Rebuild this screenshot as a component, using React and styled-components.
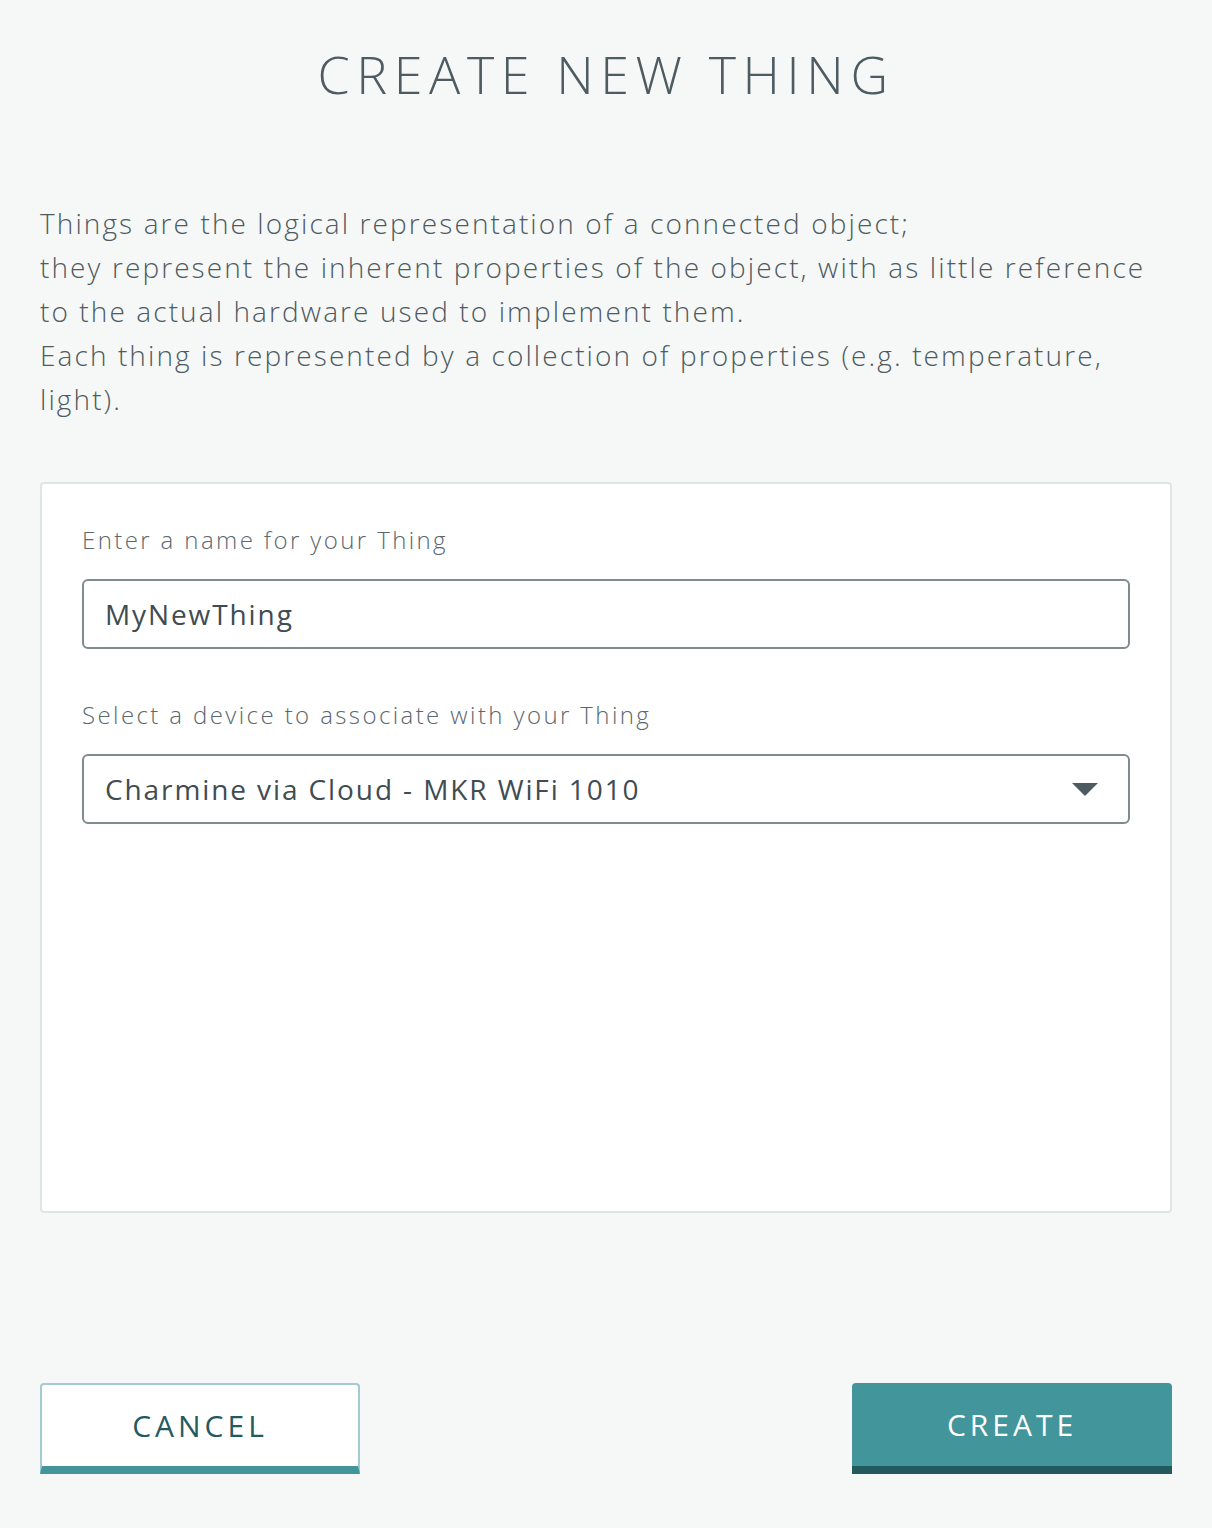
import React from 'react';
import styled, { createGlobalStyle } from 'styled-components';

const GlobalStyle = createGlobalStyle`
  html, body {
    margin: 0;
    padding: 0;
    background: #f6f8f8;
  }
  * { box-sizing: border-box; }
`;

const Page = styled.div`
  width: 1212px;
  min-height: 1528px;
  padding: 44px 40px 54px;
  font-family: 'Open Sans', 'Liberation Sans', sans-serif;
  color: #4e5b61;
  display: flex;
  flex-direction: column;
`;

const Title = styled.h1`
  margin: 0 0 97px;
  font-size: 52px;
  font-weight: 300;
  letter-spacing: 6.6px;
  text-align: center;
  color: #4e5b61;
  line-height: 60px;
`;

const Intro = styled.p`
  margin: 0 0 61px;
  font-size: 28px;
  font-weight: 300;
  line-height: 44px;
  letter-spacing: 2.1px;
  color: #4e5b61;
`;

const Card = styled.div`
  background: #ffffff;
  border: 2px solid #dde5e5;
  border-radius: 4px;
  height: 731px;
  padding: 38px 40px;
  display: flex;
  flex-direction: column;
`;

const Label = styled.label`
  font-size: 24px;
  font-weight: 300;
  letter-spacing: 2.4px;
  color: #5b686e;
  line-height: 36px;
  margin-bottom: 21px;
`;

const Field = styled.div`
  height: 70px;
  border: 2px solid #7f8b8d;
  border-radius: 6px;
  display: flex;
  align-items: center;
  justify-content: space-between;
  padding: 0 30px 0 21px;
  font-size: 28px;
  font-weight: 400;
  letter-spacing: 1.9px;
  color: #3f4c52;
  margin-bottom: ${p => p.gap || 0}px;
`;

const Caret = styled.span`
  width: 0;
  height: 0;
  border-left: 13px solid transparent;
  border-right: 13px solid transparent;
  border-top: 13px solid #4e5b61;
`;

const Actions = styled.div`
  margin-top: auto;
  display: flex;
  justify-content: space-between;
`;

const Button = styled.button`
  width: 320px;
  height: 91px;
  border-radius: 4px 4px 0 0;
  font-family: 'Open Sans', 'Liberation Sans', sans-serif;
  font-size: 30px;
  font-weight: 400;
  letter-spacing: 4px;
  padding: 0;
  cursor: pointer;
  background: ${p => (p.primary ? '#42959a' : '#ffffff')};
  color: ${p => (p.primary ? '#ffffff' : '#245a5e')};
  border: ${p => (p.primary ? 'none' : '2px solid #a2ccd1')};
  border-bottom: 8px solid ${p => (p.primary ? '#245a5e' : '#42959a')};
`;

export default function App() {
  return (
    <>
      <GlobalStyle />
      <Page>
        <Title>CREATE NEW THING</Title>
        <Intro>
          Things are the logical representation of a connected object;
          <br />
          they represent the inherent properties of the object, with as little reference to the actual hardware used to implement them.
          <br />
          Each thing is represented by a collection of properties (e.g. temperature, light).
        </Intro>
        <Card>
          <Label>Enter a name for your Thing</Label>
          <Field gap={48}>MyNewThing</Field>
          <Label>Select a device to associate with your Thing</Label>
          <Field>
            Charmine via Cloud - MKR WiFi 1010
            <Caret />
          </Field>
        </Card>
        <Actions>
          <Button>CANCEL</Button>
          <Button primary>CREATE</Button>
        </Actions>
      </Page>
    </>
  );
}
